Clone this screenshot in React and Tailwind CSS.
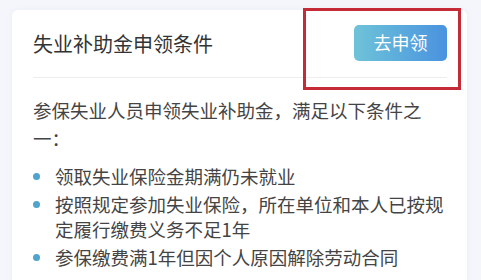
import React from 'react';

const conditions = [
  '领取失业保险金期满仍未就业',
  '按照规定参加失业保险，所在单位和本人已按规定履行缴费义务不足1年',
  '参保缴费满1年但因个人原因解除劳动合同',
];

function App() {
  return (
    <div
      className="relative h-[280px] w-[481px] overflow-hidden bg-[#f4f6fb] pl-[12px] pr-[14px] pt-[10px]"
      style={{ fontFamily: '"Noto Sans CJK SC", "Noto Sans", sans-serif' }}
    >
      <div className="h-[300px] rounded-t-[6px] bg-white pl-[21px] pr-[18px] shadow-[0_0_6px_rgba(120,140,200,0.08)]">
        <div className="mr-[2px] flex h-[68px] items-center justify-between border-b border-[#eeeeee]">
          <h2 className="text-[20px] font-normal leading-none text-[#333333]">失业补助金申领条件</h2>
          <button
            type="button"
            className="mt-[-2px] flex h-[36px] w-[93px] items-center justify-center rounded-[5px] bg-gradient-to-r from-[#6fc3d8] to-[#4a92df] text-[18px] text-white"
          >
            去申领
          </button>
        </div>

        <p className="mt-[18px] text-[18.5px] leading-[28px] text-[#444444]">
          参保失业人员申领失业补助金，满足以下条件之一：
        </p>

        <ul className="mt-[12px] flex flex-col gap-[3px]">
          {conditions.map((item) => (
            <li key={item} className="flex items-start text-[18.5px] leading-[25px] text-[#444444]">
              <span className="mr-[15px] mt-[9px] h-[7px] w-[7px] shrink-0 rounded-full bg-[#4fa3cc]" />
              <span>{item}</span>
            </li>
          ))}
        </ul>
      </div>

      <div className="absolute left-[303px] top-[8px] h-[82px] w-[158px] border-[3px] border-[#c52b37]" />
    </div>
  );
}

export default App;
